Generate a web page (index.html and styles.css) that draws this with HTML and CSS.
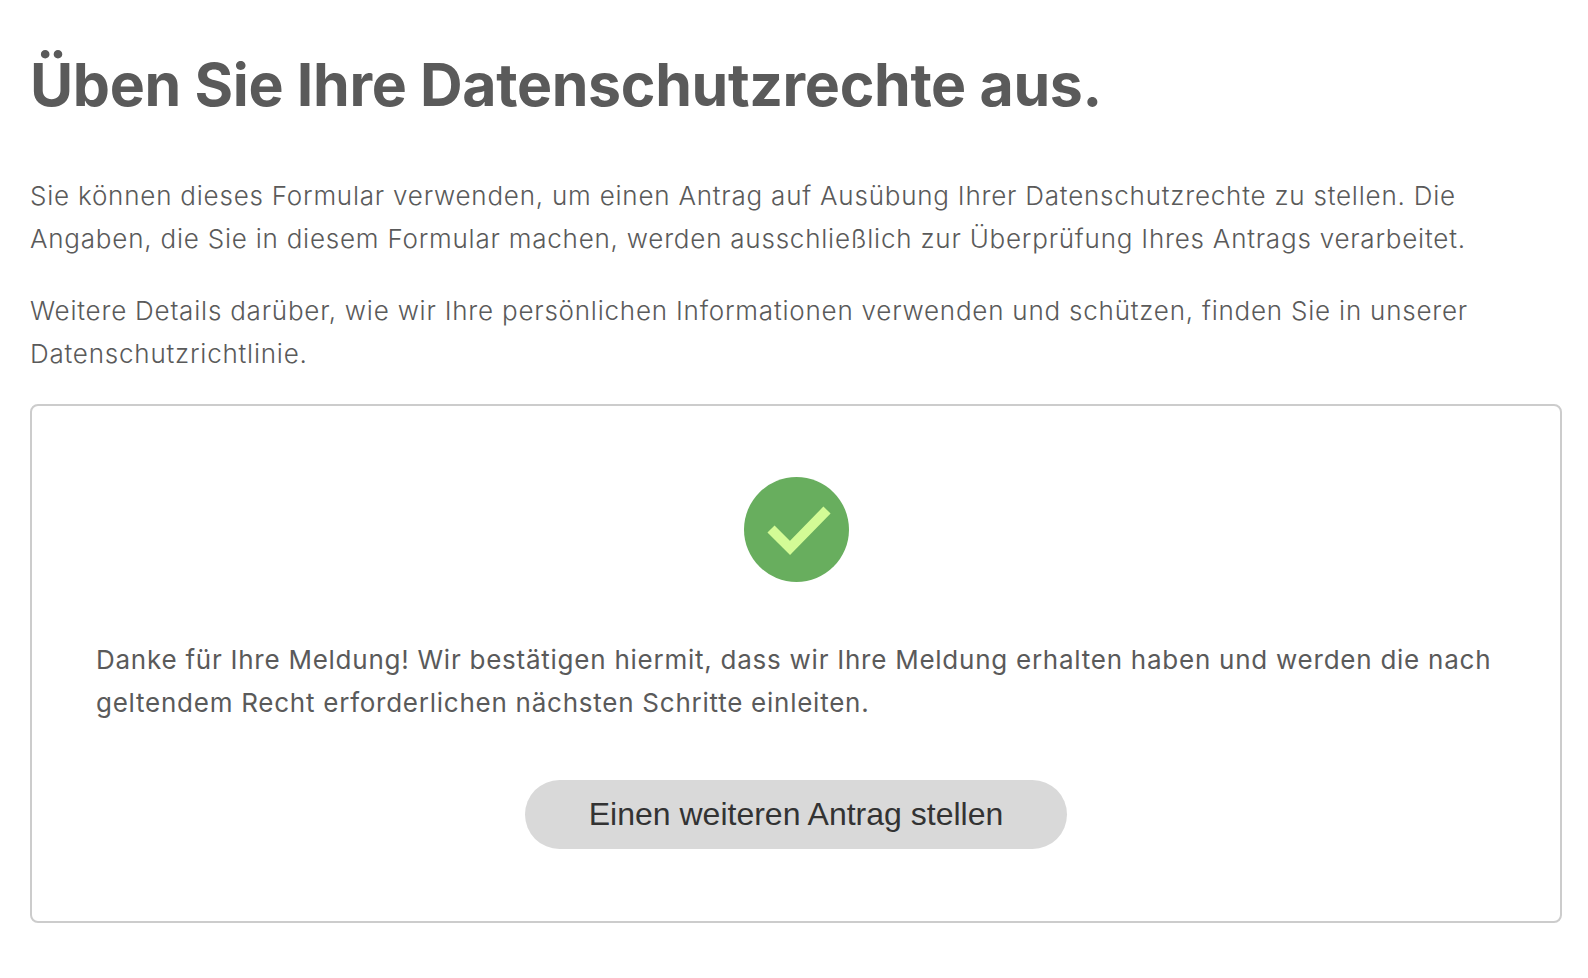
FILE: index.html
```html
<!DOCTYPE html>
<html lang="de">
<head>
    <meta charset="UTF-8">
    <meta name="viewport" content="width=device-width, initial-scale=1.0">
    <title>Datenschutzrechte</title>
    <link rel="stylesheet" href="styles.css">
</head>
<body>
    <div class="container">
        <h1>Üben Sie Ihre Datenschutzrechte aus.</h1>
        <p class="intro">Sie können dieses Formular verwenden, um einen Antrag auf Ausübung Ihrer Datenschutzrechte zu stellen. Die Angaben, die Sie in diesem Formular machen, werden ausschließlich zur Überprüfung Ihres Antrags verarbeitet.</p>
        <p class="intro">Weitere Details darüber, wie wir Ihre persönlichen Informationen verwenden und schützen, finden Sie in unserer Datenschutzrichtlinie.</p>

        <div class="card">
            <svg class="check" width="105" height="105" viewBox="0 0 105 105">
                <circle cx="52.5" cy="52.5" r="52.5" fill="#68ae5e"/>
                <path d="M27 52 L46 71 L83 33" fill="none" stroke="#d3fb96" stroke-width="10"/>
            </svg>
            <p class="message">Danke für Ihre Meldung! Wir bestätigen hiermit, dass wir Ihre Meldung erhalten haben und werden die nach geltendem Recht erforderlichen nächsten Schritte einleiten.</p>
            <button class="again">Einen weiteren Antrag stellen</button>
        </div>
    </div>
</body>
</html>
```

FILE: styles.css
```css
body {
    margin: 0;
    background: #fff;
    font-family: "Inter", sans-serif;
    color: #5a5a5a;
}
.container {
    padding: 45px 26px 56px 30px;
}
h1 {
    margin: 0 0 49px;
    font-size: 59px;
    line-height: 80px;
    font-weight: 700;
    letter-spacing: -0.35px;
}
.intro {
    margin: 0 0 29px;
    font-size: 26px;
    line-height: 43px;
    font-weight: 300;
    letter-spacing: 0.78px;
    max-width: 1480px;
}
.card {
    height: 519px;
    box-sizing: border-box;
    border: 2px solid #ccc;
    border-radius: 8px;
    padding: 71px 64px 0;
    display: flex;
    flex-direction: column;
    align-items: center;
}
.check {
    display: block;
}
.message {
    margin: 56px 0 56px;
    font-size: 26px;
    line-height: 43px;
    font-weight: 400;
    letter-spacing: 0.75px;
    align-self: stretch;
}
.again {
    width: 542px;
    height: 69px;
    border: none;
    border-radius: 35px;
    background: #d9d9d9;
    color: #333;
    font-family: "Liberation Sans", Arial, sans-serif;
    font-size: 32px;
}
```
